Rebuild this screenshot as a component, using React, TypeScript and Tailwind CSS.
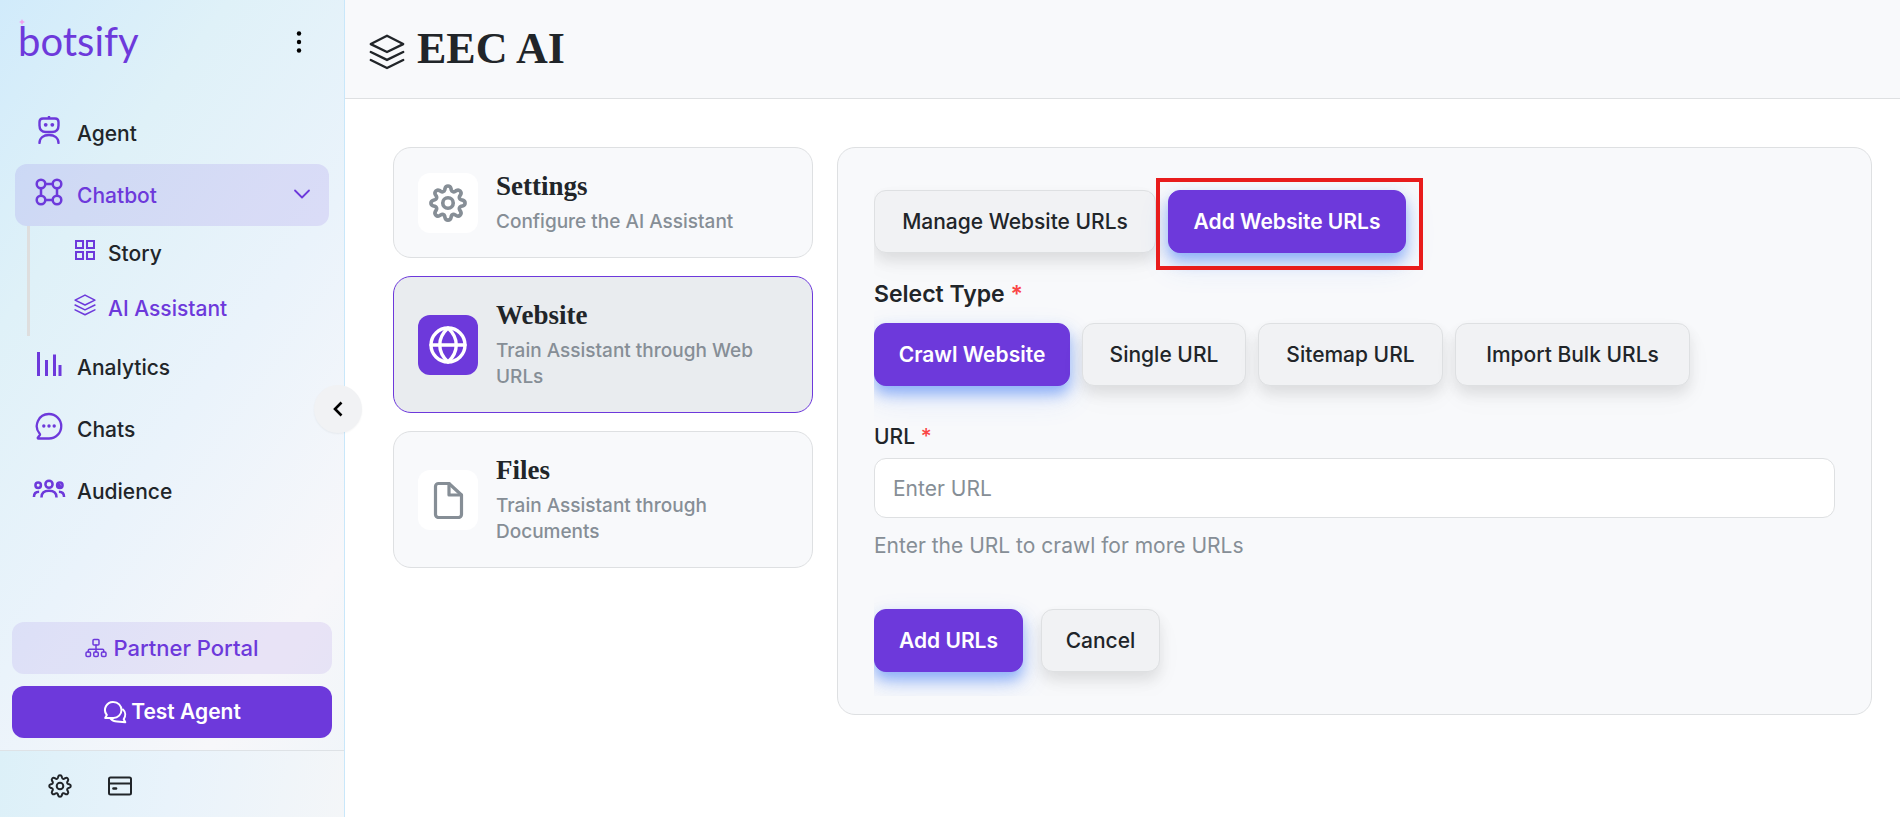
import type { ReactNode, SVGProps } from "react";

type IconProps = SVGProps<SVGSVGElement>;

function Svg(props: IconProps) {
  return (
    <svg
      viewBox="0 0 24 24"
      fill="none"
      stroke="currentColor"
      strokeWidth="1.5"
      strokeLinecap="round"
      strokeLinejoin="round"
      aria-hidden="true"
      {...props}
    />
  );
}

function AgentIcon() {
  return (
    <Svg viewBox="0 0 28 28" className="size-7" strokeWidth="2.4">
      <path d="M14 .5V2.500M8 2.500h12c2.500 0 3.500 1 3.500 3.500v3.500c0 4-2.500 6.500-6.500 6.500h-6c-4 0-6.500-2.500-6.500-6.500V6c0-2.500 1-3.500 3.500-3.500z" />
      <path d="M4.500 27c0-5 4-8 9.500-8s9.500 3 9.500 8" />
      <circle cx="10.700" cy="8.800" r="1.900" fill="currentColor" stroke="none" />
      <circle cx="17.300" cy="8.800" r="1.900" fill="currentColor" stroke="none" />
    </Svg>
  );
}

function ChatbotIcon() {
  return (
    <Svg viewBox="0 0 28 28" className="size-7" strokeWidth="2.500">
      <circle cx="6" cy="6" r="4.300" />
      <circle cx="22" cy="6" r="4.300" />
      <circle cx="6" cy="22" r="4.300" />
      <circle cx="22" cy="22" r="4.300" />
      <path d="M10.300 6h7.400M10.300 22h7.400M6 10.300v7.400M22 10.300v7.400" />
    </Svg>
  );
}

function GridIcon() {
  return (
    <Svg viewBox="0 0 22 22" className="size-[22px]" strokeWidth="2" strokeLinejoin="miter">
      <path d="M2 2h7v7H2zM13 2h7v7h-7zM2 13h7v7H2zM13 13h7v7h-7z" />
    </Svg>
  );
}

function LayersIcon({ className, strokeWidth = 1.5 }: IconProps) {
  return (
    <Svg className={className} strokeWidth={strokeWidth}>
      <path d="M12 1.200 22.800 6.700 12 12 1.200 6.700z" />
      <path d="M1.200 12 12 17.300 22.800 12M1.200 17.300 12 22.700l10.800-5.400" />
    </Svg>
  );
}

function AnalyticsIcon() {
  return (
    <Svg viewBox="0 0 28 28" className="size-7" strokeWidth="3" strokeLinecap="butt">
      <path d="M3.500 2v24M11.500 10v16M19.500 4.500V26M25 15v11" />
    </Svg>
  );
}

function ChatsIcon() {
  return (
    <Svg viewBox="0 0 28 28" className="size-7" strokeWidth="2.300">
      <path d="M14 2a12 12 0 0 1 0 24.500H3.500c-.8 0-1-.8-.5-1.300l1.700-1.900c.4-.5.4-1 0-1.500A12 12 0 0 1 14 2z" />
      <circle cx="8.800" cy="14" r="1.700" fill="currentColor" stroke="none" />
      <circle cx="14" cy="14" r="1.700" fill="currentColor" stroke="none" />
      <circle cx="19.200" cy="14" r="1.700" fill="currentColor" stroke="none" />
    </Svg>
  );
}

function AudienceIcon() {
  return (
    <Svg viewBox="0 0 34 22" className="h-[22px] w-8 overflow-visible" strokeWidth="2.700" strokeLinecap="butt">
      <circle cx="17" cy="7" r="3.800" />
      <circle cx="5.500" cy="8" r="2.900" />
      <circle cx="28.500" cy="8" r="2.900" />
      <circle cx="27.300" cy="8.800" r="2.600" fill="currentColor" stroke="none" />
      <path d="M9 21c0-4.600 3-7 8-7s8 2.400 8 7M1 20.500c0-3.200 1.600-5.500 5.500-5.500M33 20.500c0-3.200-1.600-5.500-5.500-5.500" />
    </Svg>
  );
}

function GearIcon({ className, strokeWidth = 1.5 }: IconProps) {
  return (
    <Svg className={className} strokeWidth={strokeWidth}>
      <circle cx="12" cy="12" r="3.300" />
      <path d="M10.100 2.900c.5-2.200 3.300-2.200 3.800 0l.2.900c.3 1 1.400 1.500 2.300.9l.8-.5c1.900-1.200 3.800.8 2.700 2.700l-.5.700c-.6 1-.1 2.100.9 2.400l.9.200c2.100.5 2.100 3.200 0 3.700l-.9.200c-1 .3-1.500 1.400-.9 2.300l.5.800c1.100 1.900-.8 3.800-2.700 2.700l-.8-.5c-.9-.6-2-.1-2.300.9l-.2.900c-.5 2.100-3.300 2.100-3.800 0l-.2-.9c-.3-1-1.400-1.500-2.300-.9l-.8.500c-1.900 1.100-3.800-.8-2.700-2.700l.5-.8c.6-.9.1-2-.9-2.300l-.9-.2c-2.100-.5-2.100-3.200 0-3.700l.9-.2c1-.3 1.500-1.400.9-2.400l-.5-.7c-1.100-1.900.8-3.900 2.700-2.700l.8.500c.9.600 2 .1 2.300-.9z" />
    </Svg>
  );
}

function GlobeIcon() {
  return (
    <Svg viewBox="0 0 38 38" className="size-[38px]" strokeWidth="3.400">
      <circle cx="19" cy="19" r="17" />
      <path d="M2 19h34M19 2c-11 10-11 24 0 34M19 2c11 10 11 24 0 34" />
    </Svg>
  );
}

function FileIcon() {
  return (
    <Svg viewBox="0 0 38 38" className="size-[38px]" strokeWidth="3.200">
      <path d="M20 2.500H9.500a3 3 0 0 0-3 3v28a3 3 0 0 0 3 3h20a3 3 0 0 0 3-3V14z" />
      <path d="M20 2.500V14h12.500" />
    </Svg>
  );
}

function NetworkIcon() {
  return (
    <Svg viewBox="0 0 22 20" className="h-5 w-[22px]" strokeWidth="1.500">
      <rect x="8" y="1.500" width="6" height="5.500" rx="1" />
      <rect x="1" y="14" width="4.500" height="4.500" rx="1.200" />
      <rect x="8.750" y="14" width="4.500" height="4.500" rx="1.200" />
      <rect x="16.500" y="14" width="4.500" height="4.500" rx="1.200" />
      <path d="M11 7v7M3.250 14v-1.500c0-.8.500-1.300 1.300-1.300h12.900c.8 0 1.300.5 1.300 1.300V14" />
    </Svg>
  );
}

function TestIcon() {
  return (
    <Svg viewBox="0 0 24 24" className="size-6" strokeWidth="2">
      <path d="M10.500 2a8 8 0 1 1 0 16H2.200l1.600-3A8 8 0 0 1 10.500 2z" />
      <path d="M7.500 18.500c1.800 2 4 3 6.500 3l8.300.7-1.600-3c2.200-3.200 2-7.200-.7-9.700" />
    </Svg>
  );
}

function NavLink({ icon, children }: { icon: ReactNode; children: ReactNode }) {
  return (
    <a href="#" className="flex h-[62px] items-center rounded-xl pl-[18px] pt-0.5 text-[21px] font-medium text-[#212529]">
      <span className="flex w-8 -translate-y-1 justify-center">{icon}</span>
      <span className="ml-3">{children}</span>
    </a>
  );
}

function SubLink({ icon, active, children }: { icon: ReactNode; active?: boolean; children: ReactNode }) {
  return (
    <a
      href="#"
      className={`flex h-[55px] items-center gap-3 pl-11 text-[21px] font-medium ${active ? "text-[#6d39db]" : "text-[#212529]"}`}
    >
      <span className="-translate-y-1 text-[#6d39db]">{icon}</span>
      {children}
    </a>
  );
}

function Sidebar() {
  return (
    <aside className="relative flex w-[345px] shrink-0 flex-col border-r border-[#c9e7fa] bg-[linear-gradient(125deg,#d1ebfb_0%,#dff1f8_25%,#eaf3fb_52%,#f7f7fa_80%,#eff5f9_100%)]">
      <div className="flex h-[102px] items-start justify-between pl-[18px]">
        <div className="relative pt-[18px] font-[Lato,sans-serif] text-[40px] leading-[46px] text-[#6d39db]">
          botsify
          <svg viewBox="0 0 6 6" className="absolute left-px top-[19px] size-[6px] fill-[#f0a0ee]" aria-hidden="true">
            <path d="M3 0 4 2 6 3 4 4 3 6 2 4 0 3 2 2z" />
          </svg>
        </div>
        <button type="button" aria-label="More options" className="mr-9 mt-[29px] flex h-[26px] w-[18px] justify-center">
          <svg viewBox="0 0 6 26" className="h-[26px] w-[6px]" aria-hidden="true">
            <circle cx="3" cy="4.500" r="2.200" />
            <circle cx="3" cy="13" r="2.200" />
            <circle cx="3" cy="21.500" r="2.200" />
          </svg>
        </button>
      </div>

      <nav className="px-[15px]">
        <NavLink icon={<span className="text-[#6d39db]"><AgentIcon /></span>}>Agent</NavLink>
        <button
          type="button"
          aria-expanded="true"
          className="flex h-[62px] w-full items-center rounded-xl bg-[#6d39db]/12 pl-[18px] pr-[18px] pt-0.5 text-[21px] font-medium text-[#6d39db]"
        >
          <span className="flex w-8 -translate-y-1 justify-center"><ChatbotIcon /></span>
          <span className="ml-3 grow text-left">Chatbot</span>
          <Svg viewBox="0 0 18 10" className="mb-1 h-[10px] w-[18px]" strokeWidth="1.800">
            <path d="m2 1.500 7 7 7-7" />
          </Svg>
        </button>
        <div className="ml-3 border-l-3 border-[#dedede]">
          <SubLink icon={<GridIcon />}>Story</SubLink>
          <SubLink active icon={<LayersIcon className="size-[22px]" strokeWidth={1.7} />}>AI Assistant</SubLink>
        </div>
        <NavLink icon={<span className="text-[#6d39db]"><AnalyticsIcon /></span>}>Analytics</NavLink>
        <NavLink icon={<span className="text-[#6d39db]"><ChatsIcon /></span>}>Chats</NavLink>
        <NavLink icon={<span className="text-[#6d39db]"><AudienceIcon /></span>}>Audience</NavLink>
      </nav>

      <div className="mt-auto flex flex-col gap-3 px-3 pb-3">
        <button type="button" className="flex h-[52px] items-center justify-center gap-1.5 rounded-xl bg-[#6d39db]/10 text-[22px] font-medium text-[#6d39db]">
          <NetworkIcon />
          Partner Portal
        </button>
        <button type="button" className="flex h-[52px] items-center justify-center gap-1 rounded-xl bg-[#6d39db] text-[21px] font-semibold text-white">
          <TestIcon />
          Test Agent
        </button>
      </div>
      <footer className="flex h-[67px] items-center gap-9 border-t border-[#dee2e6] bg-[linear-gradient(100deg,#dcf0f8_0%,#e9f3fb_50%,#f4f6f8_100%)] pl-12 pt-1 text-[#212529]">
        <button type="button" aria-label="Settings"><GearIcon className="size-6" strokeWidth={2} /></button>
        <button type="button" aria-label="Billing">
          <Svg className="size-6" strokeWidth="2">
            <rect x="1" y="3.500" width="22" height="17" rx="1.500" />
            <path d="M1 9.500h22" />
            <path d="M5.500 14.500h2.500" strokeWidth="2.600" />
          </Svg>
        </button>
      </footer>

      <button
        type="button"
        aria-label="Collapse sidebar"
        className="absolute -right-[18px] top-1/2 z-10 flex size-12 -translate-y-1/2 items-center justify-center rounded-full bg-[#f1f2f4] text-black shadow-xs"
      >
        <Svg viewBox="0 0 10 16" className="h-4 w-[10px]" strokeWidth="2.600" strokeLinecap="butt" strokeLinejoin="miter">
          <path d="M8.500 1.500 2 8l6.500 6.500" />
        </Svg>
      </button>
    </aside>
  );
}

function SourceCard({ icon, title, text, active }: { icon: ReactNode; title: string; text: string; active?: boolean }) {
  return (
    <a
      href="#"
      className={`flex items-center gap-[18px] rounded-[18px] border px-6 py-[22px] ${
        active ? "border-[#6d39db] bg-[#e9ecef]" : "border-[#dee0e2] bg-[#f8f9fb]"
      }`}
    >
      <span
        className={`flex size-[60px] shrink-0 items-center justify-center rounded-xl ${
          active ? "bg-[#6d39db] text-white" : "bg-white text-[#868e96]"
        }`}
      >
        {icon}
      </span>
      <span className="flex max-w-[270px] flex-col gap-[7px]">
        <span className="font-['Liberation_Serif',serif] text-[27px] font-bold leading-8 text-[#212529]">{title}</span>
        <span className="text-[19px] font-medium leading-[26px] text-[#868e96]">{text}</span>
      </span>
    </a>
  );
}

function Button({ primary, className, children }: { primary?: boolean; className: string; children: ReactNode }) {
  return (
    <button
      type="button"
      className={`h-[63px] rounded-xl border px-4 text-[21px] ${className} ${
        primary
          ? "border-[#6d39db] bg-[#6d39db] font-semibold text-white shadow-[0_8px_14px_rgba(60,120,245,0.5),0_12px_30px_rgba(60,120,245,0.15)]"
          : "border-[#dee0e2] bg-[#f1f2f4] font-medium text-[#212529] shadow-[0_8px_14px_rgba(0,0,0,0.09),0_12px_30px_rgba(0,0,0,0.03)]"
      }`}
    >
      {children}
    </button>
  );
}

export default function App() {
  return (
    <div className="flex min-h-screen bg-white font-[Inter,sans-serif] text-[#212529]">
      <Sidebar />
      <div className="min-w-0 grow">
        <header className="flex h-[99px] items-center gap-3 border-b border-[#dee0e2] bg-[#f8f9fb] pl-6">
          <LayersIcon className="mt-1.5 size-[36px]" strokeWidth={1.6} />
          <h1 className="font-['Liberation_Serif',serif] text-[44px] font-bold leading-none">EEC AI</h1>
        </header>

        <main className="flex items-start gap-6 py-12 pl-12 pr-7">
          <nav aria-label="Training sources" className="flex w-[420px] shrink-0 flex-col gap-[18px]">
            <SourceCard icon={<GearIcon className="size-[38px]" strokeWidth={2.3} />} title="Settings" text="Configure the AI Assistant" />
            <SourceCard active icon={<GlobeIcon />} title="Website" text="Train Assistant through Web URLs" />
            <SourceCard icon={<FileIcon />} title="Files" text="Train Assistant through Documents" />
          </nav>

          <section className="min-w-0 grow rounded-[18px] border border-[#dee0e2] bg-[#f8f9fb] px-9 pb-[18px] pt-[42px]">
            <form className="-mt-4 overflow-hidden pb-6 pt-4" onSubmit={(event) => event.preventDefault()}>
              <div className="flex gap-3">
                <Button className="min-w-[282px]">Manage Website URLs</Button>
                <div className="relative">
                  <Button primary className="min-w-[238px]">Add Website URLs</Button>
                  <div className="pointer-events-none absolute -bottom-[17px] -left-3 -right-[17px] -top-3 border-4 border-[#e81c1c]" />
                </div>
              </div>

              <fieldset className="mt-6">
                <legend className="text-[23px] font-semibold leading-[34px]">
                  Select Type <span className="text-[#fa4545]">*</span>
                </legend>
                <div className="mt-3 flex gap-3">
                  <Button primary className="min-w-[196px]">Crawl Website</Button>
                  <Button className="min-w-[164px]">Single URL</Button>
                  <Button className="min-w-[185px]">Sitemap URL</Button>
                  <Button className="min-w-[235px]">Import Bulk URLs</Button>
                </div>
              </fieldset>

              <label htmlFor="url" className="mt-9 block text-[21px] font-medium leading-[30px]">
                URL <span className="text-[#fa4545]">*</span>
              </label>
              <input
                id="url"
                type="url"
                placeholder="Enter URL"
                className="mt-1.5 h-[60px] w-full rounded-xl border border-[#dee0e2] bg-white px-[18px] text-[21px] text-[#212529] placeholder:text-[#868e96]"
              />
              <p className="mt-3 text-[21px] leading-8 text-[#868e96]">Enter the URL to crawl for more URLs</p>

              <div className="mt-[47px] flex gap-[18px]">
                <Button primary className="min-w-[149px]">Add URLs</Button>
                <Button className="min-w-[119px]">Cancel</Button>
              </div>
            </form>
          </section>
        </main>
      </div>
    </div>
  );
}
